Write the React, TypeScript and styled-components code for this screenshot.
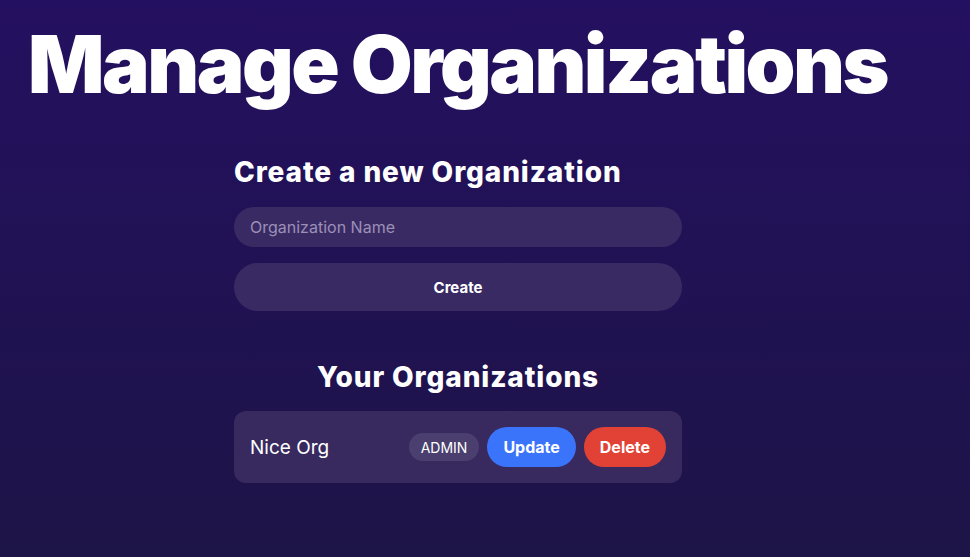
import styled, { createGlobalStyle } from "styled-components";

const GlobalStyle = createGlobalStyle`
  html, body {
    margin: 0;
    padding: 0;
    min-height: 100%;
  }
  body {
    background: linear-gradient(180deg, #241060 0%, #1d1447 100%);
    min-height: 557px;
    color: #fff;
    font-family: Inter, "Noto Sans", sans-serif;
  }
`;

const Page = styled.main`
  min-height: 557px;
  padding: 16px 0 0 28px;
  box-sizing: border-box;
`;

const Title = styled.h1`
  margin: 0;
  font-size: 80px;
  font-weight: 900;
  letter-spacing: -2.5px;
  line-height: 96px;
  color: #fff;
`;

const Panel = styled.div`
  width: 448px;
  margin: 42px 0 0 206px;
  display: flex;
  flex-direction: column;
`;

const Subtitle = styled.h2<{ center?: boolean }>`
  margin: 0;
  font-size: 28px;
  font-weight: 800;
  line-height: 36px;
  letter-spacing: 0.9px;
  text-align: ${(props) => (props.center ? "center" : "left")};
`;

const Input = styled.input`
  margin-top: 17px;
  height: 40px;
  border: none;
  border-radius: 20px;
  background: #3a2a63;
  padding: 0 16px;
  font-family: Inter, sans-serif;
  font-size: 16px;
  color: #fff;
  outline: none;
  &::placeholder {
    color: #9b90b8;
  }
`;

const CreateButton = styled.button`
  margin-top: 16px;
  height: 48px;
  border: none;
  border-radius: 24px;
  background: #3a2a63;
  color: #fff;
  font-family: Inter, sans-serif;
  font-size: 15px;
  font-weight: 700;
`;

const ListTitle = styled(Subtitle)`
  margin-top: 48px;
`;

const Card = styled.div`
  margin-top: 16px;
  height: 72px;
  border-radius: 12px;
  background: #382a5e;
  display: flex;
  align-items: center;
  padding: 0 16px;
  gap: 8px;
`;

const OrgName = styled.span`
  flex: 1;
  font-size: 19px;
`;

const Badge = styled.span`
  height: 28px;
  padding: 0 12px;
  border-radius: 14px;
  background: #4a3f6e;
  display: flex;
  align-items: center;
  font-size: 14px;
`;

const ActionButton = styled.button<{ tone: "blue" | "red" }>`
  height: 40px;
  padding: 0 16px;
  border: none;
  border-radius: 20px;
  background: ${(props) => (props.tone === "blue" ? "#3a74fb" : "#e24236")};
  color: #fff;
  font-family: Inter, sans-serif;
  font-size: 16px;
  font-weight: 700;
`;

const App = () => {
  return (
    <>
      <GlobalStyle />
      <Page>
        <Title>Manage Organizations</Title>
        <Panel>
          <Subtitle>Create a new Organization</Subtitle>
          <Input placeholder="Organization Name" />
          <CreateButton>Create</CreateButton>
          <ListTitle center>Your Organizations</ListTitle>
          <Card>
            <OrgName>Nice Org</OrgName>
            <Badge>ADMIN</Badge>
            <ActionButton tone="blue">Update</ActionButton>
            <ActionButton tone="red">Delete</ActionButton>
          </Card>
        </Panel>
      </Page>
    </>
  );
};

export default App;
